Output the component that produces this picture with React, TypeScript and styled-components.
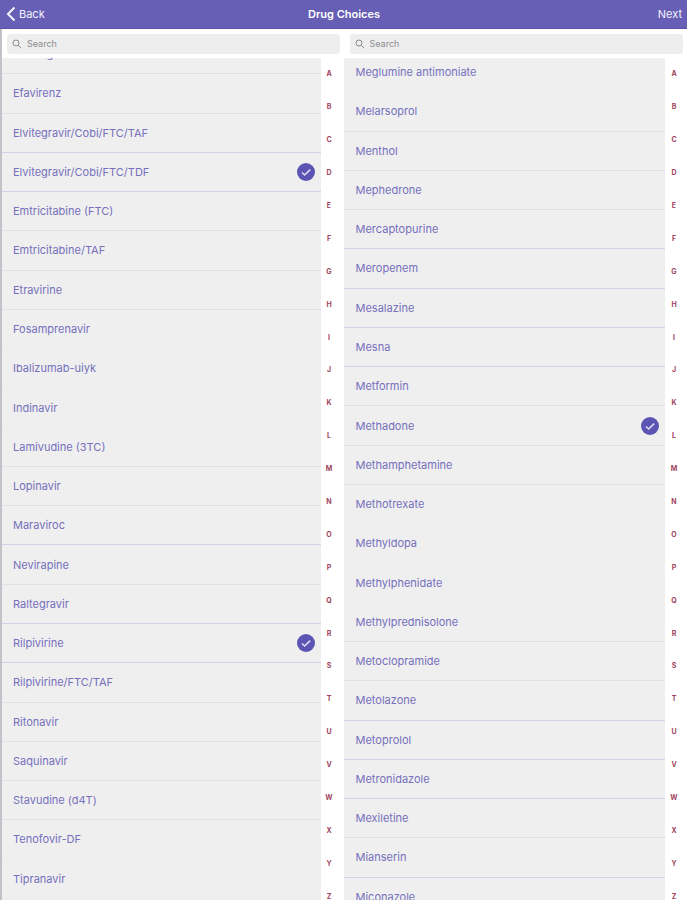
import React, { useState } from "react";
import styled, { createGlobalStyle } from "styled-components";

const GlobalStyle = createGlobalStyle`
  *, *::before, *::after { box-sizing: border-box; }
  html, body, #root { height: 100%; }
  body {
    margin: 0;
    background: #fff;
    font-family: Inter, "Liberation Sans", sans-serif;
    -webkit-font-smoothing: antialiased;
  }
  button { font: inherit; border: 0; background: none; padding: 0; cursor: pointer; }
`;

const Screen = styled.div`
  display: flex;
  flex-direction: column;
  height: 100vh;
  overflow: hidden;
`;

const NavBar = styled.header`
  flex: none;
  display: grid;
  grid-template-columns: 1fr auto 1fr;
  align-items: center;
  height: 29px;
  padding: 0 5px 0 6px;
  background: #665fb5;
  border-bottom: 1px solid #5850a9;
  color: #fff;
`;

const NavButton = styled.button<{ $end?: boolean }>`
  display: flex;
  align-items: center;
  gap: 3px;
  justify-self: ${(p) => (p.$end ? "end" : "start")};
  color: #f4f3fb;
  font-size: 11px;
  line-height: 16px;
`;

const Title = styled.h1`
  margin: 0;
  font-size: 11px;
  line-height: 16px;
  font-weight: 600;
`;

const Panels = styled.main`
  flex: 1;
  min-height: 0;
  display: grid;
  grid-template-columns: 1fr 1fr;
`;

const Panel = styled.section<{ $edge?: boolean }>`
  display: flex;
  flex-direction: column;
  min-width: 0;
  min-height: 0;
  border-left: ${(p) => (p.$edge ? "2px solid #c3c2c8" : "0")};
`;

const SearchField = styled.label<{ $edge?: boolean }>`
  flex: none;
  display: flex;
  align-items: center;
  gap: 5px;
  height: 20px;
  margin: 5px 4px 4px ${(p) => (p.$edge ? 5 : 6)}px;
  padding: 0 5px;
  border-radius: 3px;
  background: #eeeeee;
  color: #8b8b8e;
`;

const SearchInput = styled.input`
  flex: 1;
  min-width: 0;
  border: 0;
  padding: 0;
  outline: 0;
  background: transparent;
  font-family: inherit;
  font-size: 9px;
  line-height: 16px;
  color: #555;
  &::placeholder { color: #8b8b8e; opacity: 1; }
`;

const Body = styled.div`
  flex: 1;
  min-height: 0;
  display: flex;
`;

const ListViewport = styled.div`
  flex: 1;
  min-width: 0;
  overflow: hidden;
  background: #efefef;
`;

const List = styled.ul<{ $scrolled: number }>`
  display: flex;
  flex-direction: column;
  height: calc(100% + 22px);
  margin: -${(p) => p.$scrolled}px 0 0;
  padding: 0;
  list-style: none;
`;

const Item = styled.li<{ $line: Line }>`
  flex: 1;
  min-height: 0;
  display: flex;
  border-bottom: 1px solid
    ${(p) => ({ strong: "#d2d1e8", soft: "#e0e0e6", none: "#ededee" })[p.$line]};
`;

const Choice = styled.label<{ $edge?: boolean }>`
  flex: 1;
  display: flex;
  align-items: center;
  justify-content: space-between;
  padding: 0 6px 0 ${(p) => (p.$edge ? 11 : 12)}px;
  color: #7670bd;
  font-size: 11px;
  line-height: 16px;
  cursor: pointer;
`;

const Tick = styled.input`
  position: absolute;
  opacity: 0;
  width: 1px;
  height: 1px;
  margin: 0;
`;

const IndexBar = styled.nav<{ $edge?: boolean }>`
  flex: none;
  display: flex;
  flex-direction: column;
  width: ${(p) => (p.$edge ? 23 : 22)}px;
  height: calc(100% + 13px);
  padding-right: ${(p) => (p.$edge ? 6 : 4)}px;
`;

const IndexLink = styled.a`
  flex: 1;
  display: flex;
  align-items: center;
  justify-content: center;
  color: #a04460;
  font-size: 7px;
  line-height: 8px;
  font-weight: 700;
  text-decoration: none;
`;

const BackIcon = () => (
  <svg width="10" height="16" viewBox="0 0 10 16" fill="none" stroke="currentColor" strokeWidth="2" aria-hidden="true">
    <path d="M8.5 1.5 L2 8 L8.5 14.5" />
  </svg>
);

const SearchIcon = () => (
  <svg width="10" height="10" viewBox="0 0 10 10" fill="none" stroke="currentColor" strokeWidth="1" aria-hidden="true">
    <circle cx="4" cy="4" r="3" />
    <path d="M6.2 6.2 L9.2 9.2" />
  </svg>
);

const CheckIcon = () => (
  <svg width="18" height="18" viewBox="0 0 18 18" aria-hidden="true">
    <circle cx="9" cy="9" r="9" fill="#5c54b2" />
    <path d="M5 9.5 L7.6 12 L13.2 6.6" fill="none" stroke="#dddcf0" strokeWidth="1.6" />
  </svg>
);

type Line = "strong" | "soft" | "none";
type Drug = [name: string, line: Line];

const ANTIRETROVIRALS: Drug[] = [
  ["Dolutegravir", "soft"],
  ["Efavirenz", "soft"],
  ["Elvitegravir/Cobi/FTC/TAF", "strong"],
  ["Elvitegravir/Cobi/FTC/TDF", "strong"],
  ["Emtricitabine (FTC)", "soft"],
  ["Emtricitabine/TAF", "soft"],
  ["Etravirine", "soft"],
  ["Fosamprenavir", "none"],
  ["Ibalizumab-uiyk", "none"],
  ["Indinavir", "none"],
  ["Lamivudine (3TC)", "soft"],
  ["Lopinavir", "soft"],
  ["Maraviroc", "strong"],
  ["Nevirapine", "soft"],
  ["Raltegravir", "strong"],
  ["Rilpivirine", "strong"],
  ["Rilpivirine/FTC/TAF", "soft"],
  ["Ritonavir", "soft"],
  ["Saquinavir", "soft"],
  ["Stavudine (d4T)", "soft"],
  ["Tenofovir-DF", "none"],
  ["Tipranavir", "none"],
];

const OTHER_DRUGS: Drug[] = [
  ["Meglumine antimoniate", "none"],
  ["Melarsoprol", "soft"],
  ["Menthol", "soft"],
  ["Mephedrone", "soft"],
  ["Mercaptopurine", "strong"],
  ["Meropenem", "strong"],
  ["Mesalazine", "strong"],
  ["Mesna", "strong"],
  ["Metformin", "soft"],
  ["Methadone", "soft"],
  ["Methamphetamine", "soft"],
  ["Methotrexate", "none"],
  ["Methyldopa", "none"],
  ["Methylphenidate", "none"],
  ["Methylprednisolone", "soft"],
  ["Metoclopramide", "soft"],
  ["Metolazone", "strong"],
  ["Metoprolol", "strong"],
  ["Metronidazole", "strong"],
  ["Mexiletine", "soft"],
  ["Mianserin", "strong"],
  ["Miconazole", "soft"],
];

const LETTERS = "ABCDEFGHIJKLMNOPQRSTUVWXYZ".split("");

interface DrugPanelProps {
  label: string;
  drugs: Drug[];
  initial: string[];
  scrolled: number;
  edge?: boolean;
}

function DrugPanel({ label, drugs, initial, scrolled, edge }: DrugPanelProps) {
  const [chosen, setChosen] = useState<string[]>(initial);
  const toggle = (name: string) =>
    setChosen((now) => (now.includes(name) ? now.filter((n) => n !== name) : [...now, name]));

  return (
    <Panel $edge={edge} aria-label={label}>
      <SearchField $edge={edge}>
        <SearchIcon />
        <SearchInput type="search" placeholder="Search" aria-label={`Search ${label}`} />
      </SearchField>
      <Body>
        <ListViewport>
          <List $scrolled={scrolled}>
            {drugs.map(([name, line]) => (
              <Item key={name} $line={line}>
                <Choice $edge={edge}>
                  <Tick type="checkbox" checked={chosen.includes(name)} onChange={() => toggle(name)} />
                  <span>{name}</span>
                  {chosen.includes(name) && <CheckIcon />}
                </Choice>
              </Item>
            ))}
          </List>
        </ListViewport>
        <IndexBar $edge={edge} aria-label={`${label} index`}>
          {LETTERS.map((letter) => (
            <IndexLink key={letter} href={`#${letter}`}>{letter}</IndexLink>
          ))}
        </IndexBar>
      </Body>
    </Panel>
  );
}

export default function App() {
  return (
    <>
      <GlobalStyle />
      <Screen>
        <NavBar>
          <NavButton type="button"><BackIcon />Back</NavButton>
          <Title>Drug Choices</Title>
          <NavButton type="button" $end>Next</NavButton>
        </NavBar>
        <Panels>
          <DrugPanel
            edge
            label="HIV drugs"
            drugs={ANTIRETROVIRALS}
            initial={["Elvitegravir/Cobi/FTC/TDF", "Rilpivirine"]}
            scrolled={23}
          />
          <DrugPanel label="Other drugs" drugs={OTHER_DRUGS} initial={["Methadone"]} scrolled={5} />
        </Panels>
      </Screen>
    </>
  );
}
